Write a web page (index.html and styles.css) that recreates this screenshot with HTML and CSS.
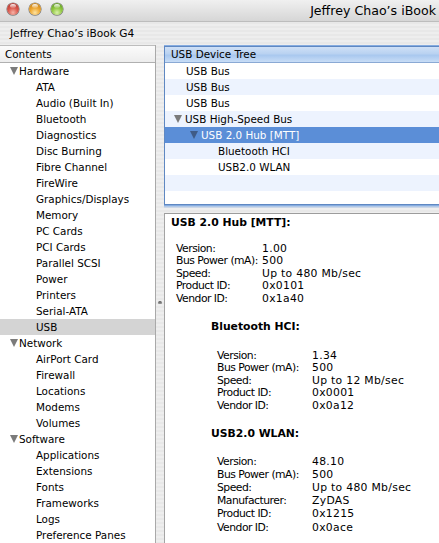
FILE: index.html
```html
<!DOCTYPE html>
<html lang="en">
<head>
  <meta charset="UTF-8">
  <title>System Profiler</title>
  <link rel="stylesheet" href="styles.css">
</head>
<body>
  <div class="window">
    <div class="titlebar">
      <div class="lights">
        <span class="light red"></span>
        <span class="light amber"></span>
        <span class="light green"></span>
      </div>
      <div class="title">Jeffrey Chao’s iBook</div>
    </div>

    <div class="machine">Jeffrey Chao’s iBook G4</div>

    <div class="main">
      <div class="sidebar">
        <div class="colhead">Contents</div>
        <ul class="tree">
          <li class="group">Hardware</li>
          <li>ATA</li>
          <li>Audio (Built In)</li>
          <li>Bluetooth</li>
          <li>Diagnostics</li>
          <li>Disc Burning</li>
          <li>Fibre Channel</li>
          <li>FireWire</li>
          <li>Graphics/Displays</li>
          <li>Memory</li>
          <li>PC Cards</li>
          <li>PCI Cards</li>
          <li>Parallel SCSI</li>
          <li>Power</li>
          <li>Printers</li>
          <li>Serial-ATA</li>
          <li class="selected">USB</li>
          <li class="group">Network</li>
          <li>AirPort Card</li>
          <li>Firewall</li>
          <li>Locations</li>
          <li>Modems</li>
          <li>Volumes</li>
          <li class="group">Software</li>
          <li>Applications</li>
          <li>Extensions</li>
          <li>Fonts</li>
          <li>Frameworks</li>
          <li>Logs</li>
          <li>Preference Panes</li>
        </ul>
      </div>

      <div class="splitter"><span class="dimple"></span></div>

      <div class="content">
        <div class="devices">
          <div class="colhead blue">USB Device Tree</div>
          <ul class="device-list">
            <li class="lvl1">USB Bus</li>
            <li class="lvl1">USB Bus</li>
            <li class="lvl1">USB Bus</li>
            <li class="lvl1 open">USB High-Speed Bus</li>
            <li class="lvl2 open selected">USB 2.0 Hub [MTT]</li>
            <li class="lvl3">Bluetooth HCI</li>
            <li class="lvl3">USB2.0 WLAN</li>
            <li></li>
            <li></li>
          </ul>
        </div>

        <div class="details">
          <h2 class="dev-name">USB 2.0 Hub [MTT]:</h2>
          <dl class="props">
            <dt>Version:</dt><dd>1.00</dd>
            <dt>Bus Power (mA):</dt><dd>500</dd>
            <dt>Speed:</dt><dd>Up to 480 Mb/sec</dd>
            <dt>Product ID:</dt><dd>0x0101</dd>
            <dt>Vendor ID:</dt><dd>0x1a40</dd>
          </dl>

          <div class="child">
            <h3 class="dev-name">Bluetooth HCI:</h3>
            <dl class="props">
              <dt>Version:</dt><dd>1.34</dd>
              <dt>Bus Power (mA):</dt><dd>500</dd>
              <dt>Speed:</dt><dd>Up to 12 Mb/sec</dd>
              <dt>Product ID:</dt><dd>0x0001</dd>
              <dt>Vendor ID:</dt><dd>0x0a12</dd>
            </dl>

            <h3 class="dev-name">USB2.0 WLAN:</h3>
            <dl class="props wide">
              <dt>Version:</dt><dd>48.10</dd>
              <dt>Bus Power (mA):</dt><dd>500</dd>
              <dt>Speed:</dt><dd>Up to 480 Mb/sec</dd>
              <dt>Manufacturer:</dt><dd>ZyDAS</dd>
              <dt>Product ID:</dt><dd>0x1215</dd>
              <dt>Vendor ID:</dt><dd>0x0ace</dd>
            </dl>
          </div>
        </div>
      </div>
    </div>
  </div>
</body>
</html>
```

FILE: styles.css
```css
:root {
  --text: #000;
  --pinstripe-a: #eeeeee;
  --pinstripe-b: #e8e8e8;
  --select-blue: #5b8ed7;
  --select-gray: #d4d4d4;
  --stripe: #edf3fe;
  --triangle: #7b7b7b;
}
* { margin: 0; padding: 0; box-sizing: border-box; }
html, body { width: 439px; height: 543px; overflow: hidden; }
body { font-family: "DejaVu Sans", "Liberation Sans", sans-serif; font-size: 10.4px; color: var(--text); }
ul { list-style: none; }

.window {
  width: 439px;
  height: 543px;
  display: flex;
  flex-direction: column;
  background: repeating-linear-gradient(var(--pinstripe-a) 0 2px, var(--pinstripe-b) 2px 4px);
}

/* Title bar with the three gumdrop buttons */
.titlebar {
  height: 22px;
  flex: 0 0 auto;
  display: flex;
  align-items: center;
  background: linear-gradient(#f0f0f0, #d6d6d6);
  border-bottom: 1px solid #bdbdbd;
}
.lights { display: flex; gap: 10px; padding-left: 7px; margin-top: -3px; }
.light {
  width: 12px;
  height: 12px;
  border-radius: 50%;
  position: relative;
  box-shadow: 0 0 0 0.6px rgba(0,0,0,0.45), 0 1px 1px rgba(0,0,0,0.15);
}
.light::after {
  content: "";
  position: absolute;
  left: 3px;
  top: 1px;
  width: 6px;
  height: 4px;
  border-radius: 50%;
  background: linear-gradient(rgba(255,255,255,0.95), rgba(255,255,255,0.15));
}
.light.red   { background: radial-gradient(circle at 50% 80%, #f6b4a8 0, #d9564b 45%, #a1302a 100%); }
.light.amber { background: radial-gradient(circle at 50% 80%, #fde3a0 0, #eda52e 45%, #b27315 100%); }
.light.green { background: radial-gradient(circle at 50% 80%, #d9f1a8 0, #8fc63f 45%, #4f8a1d 100%); }
.title {
  flex: 1;
  text-align: right;
  padding-right: 3px;
  font-size: 12.6px;
  white-space: nowrap;
  overflow: hidden;
}

.machine {
  height: 23px;
  flex: 0 0 auto;
  line-height: 23px;
  padding-left: 10px;
  font-size: 10.6px;
}

.main { flex: 1; display: flex; min-height: 0; }

/* Column headers */
.colhead {
  height: 18px;
  line-height: 16px;
  padding-left: 5px;
  border-top: 1px solid #bdbdbd;
  border-bottom: 1px solid #b0b0b0;
  background: linear-gradient(#fbfbfb, #ededed);
  white-space: nowrap;
}
.colhead.blue {
  height: 16px;
  line-height: 15px;
  border-top: 0;
  padding-left: 6px;
  border-bottom-color: #8aa9d4;
  background: linear-gradient(#cfe0f6 0%, #b9d2f1 45%, #a9c8ef 55%, #c8ddf6 100%);
}

/* Contents sidebar */
.sidebar {
  width: 156px;
  flex: 0 0 auto;
  background: #fff;
  border-right: 1px solid #a9a9a9;
}
.tree li {
  height: 16px;
  line-height: 16px;
  padding-left: 36px;
  white-space: nowrap;
  display: flex;
  align-items: center;
}
.tree li.group { padding-left: 10px; }
.tree li.group::before,
.device-list li.open::before {
  content: "";
  width: 0;
  height: 0;
  border-left: 4.5px solid transparent;
  border-right: 4.5px solid transparent;
  border-top: 8px solid var(--triangle);
  margin-right: 1px;
}
.tree li.selected { background: var(--select-gray); }

.splitter {
  width: 8px;
  flex: 0 0 auto;
  display: flex;
  justify-content: center;
  padding-top: 256px;
}
.dimple {
  width: 4px;
  height: 3px;
  border-radius: 2px 2px 1px 1px;
  background: linear-gradient(#555, #999);
}

/* Right hand side: device tree and detail text */
.content {
  flex: 1;
  display: flex;
  flex-direction: column;
  min-width: 0;
  overflow: hidden;
  padding-top: 1px;
}
.devices {
  margin-right: -20px;
  border: 1px solid #5f88c2;
  box-shadow: 0 0 0 1px #86ace0, 0 0 0 2.5px rgba(140,178,228,0.6);
  background: #fff;
}
.device-list li {
  height: 16px;
  line-height: 16px;
  display: flex;
  align-items: center;
  white-space: nowrap;
}
.device-list li:nth-child(even) { background: var(--stripe); }
.device-list li:last-child { height: 13px; }
.device-list li.lvl1 { padding-left: 21px; }
.device-list li.lvl2 { padding-left: 37px; }
.device-list li.lvl3 { padding-left: 53px; }
.device-list li.open.lvl1 { padding-left: 9px; }
.device-list li.open.lvl2 { padding-left: 25px; }
.device-list li.open::before { margin-right: 3px; }
.device-list li.selected { background: var(--select-blue); color: #fff; }
.device-list li.selected::before { border-top-color: rgba(40,50,70,0.55); }

.details {
  flex: 1;
  margin-top: 8px;
  margin-right: -20px;
  background: #fff;
  border-top: 1px solid #9c9c9c;
  border-left: 1px solid #a4a4a4;
  padding: 2px 0 0 6px;
  font-size: 10.8px;
}
.dev-name { font-size: inherit; font-weight: bold; line-height: 13px; }
.props {
  display: grid;
  grid-template-columns: 86px auto;
  line-height: 12.4px;
  margin: 14px 0 0 5px;
}
.props dt { letter-spacing: -0.5px; white-space: nowrap; }
.props dd { letter-spacing: 0.3px; white-space: nowrap; }
.child { padding-left: 40px; }
.child .dev-name { margin-top: 15px; }
.child .props { grid-template-columns: 95px auto; margin: 17px 0 0 6px; }
.child .props.wide { line-height: 13.1px; margin-top: 15px; }
```
